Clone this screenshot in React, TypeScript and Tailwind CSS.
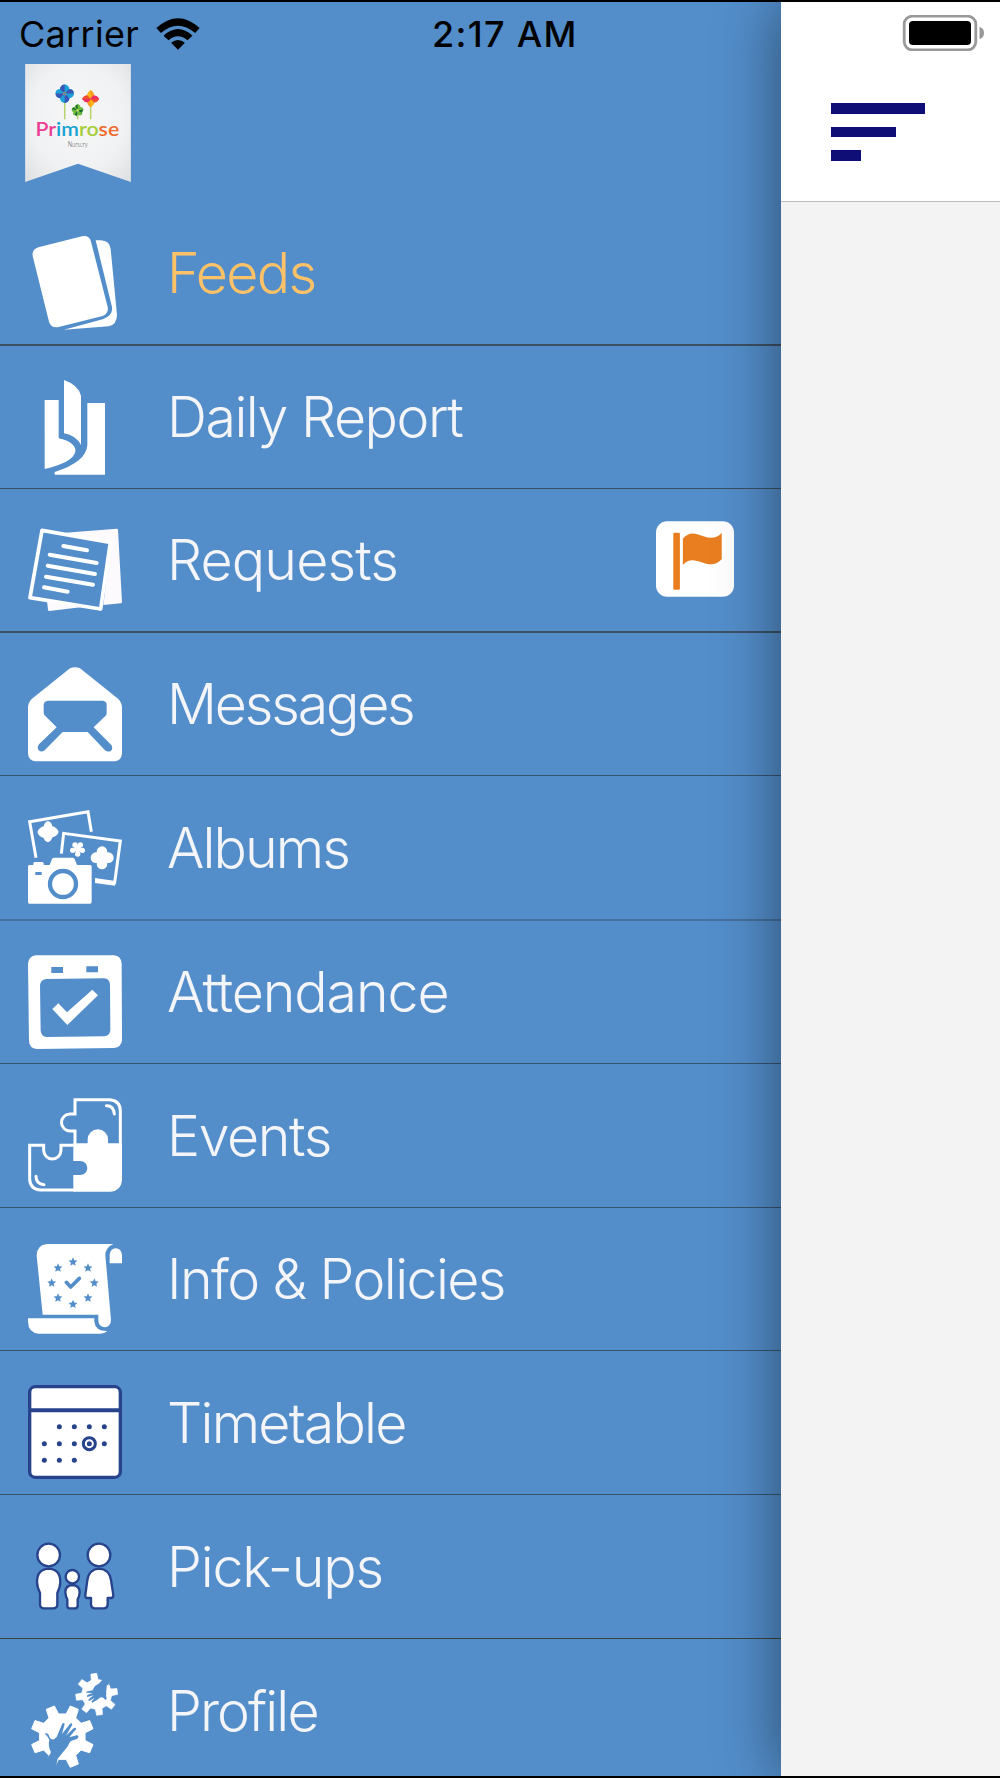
import React from "react";

const BLUE = "#538ecb";
const NAVY = "#27438b";

function gearPath(cx: number, cy: number, outer: number, inner: number, offset: number) {
  const points: string[] = [];
  const at = (r: number, deg: number) => {
    const a = (deg * Math.PI) / 180;
    points.push(`${(cx + r * Math.cos(a)).toFixed(1)} ${(cy + r * Math.sin(a)).toFixed(1)}`);
  };
  for (let i = 0; i < 8; i++) {
    const a = offset + i * 45;
    at(inner, a - 13);
    at(outer, a - 8);
    at(outer, a + 8);
    at(inner, a + 13);
  }
  return `M${points.join("L")}Z`;
}

function starPoints(cx: number, cy: number, r: number) {
  const points: string[] = [];
  for (let i = 0; i < 10; i++) {
    const a = (-90 + i * 36) * (Math.PI / 180);
    const d = i % 2 ? r * 0.46 : r;
    points.push(`${(cx + d * Math.cos(a)).toFixed(1)},${(cy + d * Math.sin(a)).toFixed(1)}`);
  }
  return points.join(" ");
}

function Icon({ top, children }: { top: number; children: React.ReactNode }) {
  return (
    <svg viewBox={`84 ${top} 282 282`} className="h-[94px] w-[94px] shrink-0 overflow-visible" fill="#fff">
      {children}
    </svg>
  );
}

const FeedsIcon = () => (
  <Icon top={77}>
    <path d="M115 111L246 78Q268 74 273 94L323 290Q327 309 308 317L176 350Q153 354 147 334L98 137Q95 118 115 111Z" />
    <path d="M287 90H302Q329 91 332 116L351 314Q350 344 326 348L192 358L308 327Q340 316 336 290Z" />
  </Icon>
);

const DailyIcon = () => (
  <Icon top={508}>
    <path d="M134 568H176V683C245 697 254 749 134 775Z" />
    <path d="M192 508Q235 523 243 555V703Q229 675 192 668Z" />
    <path d="M262 577H315V792H164V784Q259 754 262 704Z" />
  </Icon>
);

const RequestsIcon = () => (
  <Icon top={69}>
    <path fill="#fcfafc" d="M196 98L350 86Q354 86 354 90L366 306Q366 310 362 310L310 315L332 130ZM141 302L242 322L148 333Q144 333 144 329Z" />
    <path d="M126 91L331 127L302 327L90 293Z" fill={BLUE} stroke="#fff" strokeWidth="11" strokeLinejoin="round" />
    <path d="M190 138L261 151M149 164L290 189M143 197L285 222M138 230L279 254M132 262L203 275" stroke="#fff" strokeWidth="12" strokeLinecap="round" />
  </Icon>
);

const MessagesIcon = () => (
  <Icon top={500}>
    <path d="M210 504Q225 497 240 504L355 596Q366 607 366 622V760Q364 780 345 783H105Q86 780 84 760V622Q84 607 95 596Z" />
    <path fill={BLUE} d="M144 601H308Q320 602 320 613V638L319 644L281 681L334 734Q340 744 333 751Q325 757 315 750L263 695H188L134 750Q124 757 116 750Q110 742 117 732L170 681L133 644L131 638V613Q132 602 144 601Z" />
  </Icon>
);

const AlbumsIcon = () => (
  <Icon top={63}>
    <path d="M108 206L89 98L264 68L274 128M184 194L191 133L361 156L344 281L285 275" fill="none" stroke="#fff" strokeWidth="9" />
    <path d="M285 267L346 276L345 290L285 282Z" />
    <path d="M144 96Q155 99 157 112Q169 114 176 128Q173 141 157 145Q154 157 144 160Q133 156 130 146Q116 143 112 129Q118 115 131 112Q134 99 144 96Z" />
    <g>
      <circle cx="306" cy="188" r="16" />
      <circle cx="306" cy="225" r="16" />
      <circle cx="288" cy="206" r="16" />
      <circle cx="325" cy="206" r="16" />
      <circle cx="306" cy="206" r="21" />
    </g>
    <g>
      <circle cx="225" cy="168" r="8" />
      <circle cx="241" cy="168" r="8" />
      <circle cx="218" cy="184" r="8" />
      <circle cx="247" cy="184" r="8" />
      <circle cx="233" cy="195" r="8" />
      <circle cx="233" cy="179" r="10" />
    </g>
    <path d="M88 228H100V223Q101 219 105 219H126Q130 219 131 223V228H149L156 210Q158 206 163 206H217Q222 206 224 210L231 228H270Q275 228 275 233V338Q275 344 270 344H88Q84 344 84 338V233Q84 228 88 228Z" />
    <circle cx="189" cy="285" r="39" fill="#fff" stroke={BLUE} strokeWidth="13" />
    <path d="M106 249H125V258H106Z" fill={BLUE} />
  </Icon>
);

const AttendanceIcon = () => (
  <Icon top={494}>
    <path d="M108 495H342Q364 497 365 520L366 750Q364 771 342 773L110 776Q88 774 87 752L84 520Q86 497 108 495Z" />
    <path fill={BLUE} d="M154 530H189V548H154ZM259 528H294V546H259ZM138 566L312 564Q329 565 330 583L331 720Q329 737 313 738L140 740Q124 738 122 722L120 584Q122 568 138 566Z" />
    <path d="M157 656L175 639L201 666L277 598L294 615L202 704Z" />
  </Icon>
);

const EventsIcon = () => (
  <Icon top={54}>
    <path
      d="M225 191V153H210A25 25 0 0 1 210 102H225V59H330Q361 62 361 93V191M225 196H183V211A26 26 0 0 1 131 211V196H89V298Q91 328 122 330H225"
      fill="none"
      stroke="#fff"
      strokeWidth="9"
    />
    <path d="M220 190H263V178A30 30 0 0 1 324 178V190H366V300Q364 332 332 335H220V285H241A21 21 0 0 0 241 243H220Z" />
    <path d="M319 77Q341 76 343 102M108 289Q108 313 132 314" fill="none" stroke="#fff" strokeWidth="9" strokeLinecap="round" />
  </Icon>
);

const InfoIcon = () => (
  <Icon top={485}>
    <path d="M141 491H340Q316 501 316 525L333 719Q332 740 314 741Q295 739 295 719V703H128L110 526Q110 494 141 491Z" />
    <path d="M329 549V524Q331 505 347 504Q364 505 366 524V549ZM84 714H283V724Q286 753 322 752Q314 760 300 760H116Q85 757 84 724Z" />
    <g fill={BLUE}>
      {[
        [219, 544],
        [264, 562],
        [283, 607],
        [264, 652],
        [219, 671],
        [174, 652],
        [155, 607],
        [174, 562],
      ].map(([x, y]) => (
        <polygon key={`${x}-${y}`} points={starPoints(x, y + 1, 14)} />
      ))}
    </g>
    <path d="M199 606L212 620L238 594" fill="none" stroke={BLUE} strokeWidth="11" strokeLinecap="round" strokeLinejoin="round" />
  </Icon>
);

const TimetableIcon = () => (
  <Icon top={63}>
    <rect x="89" y="68" width="272" height="272" rx="17" stroke={NAVY} strokeWidth="10" />
    <path d="M89 139H361" stroke={NAVY} strokeWidth="12" />
    <g fill={NAVY}>
      {[
        [178, 188],
        [223, 188],
        [268, 188],
        [313, 188],
        [133, 239],
        [178, 239],
        [223, 239],
        [268, 239],
        [313, 239],
        [133, 289],
        [178, 289],
        [223, 289],
      ].map(([x, y]) => (
        <circle key={`${x}-${y}`} cx={x} cy={y} r="7.5" />
      ))}
    </g>
    <circle cx="268" cy="239" r="18" fill="none" stroke={NAVY} strokeWidth="9" />
  </Icon>
);

const PickupsIcon = () => (
  <Icon top={27}>
    <g stroke={NAVY} strokeWidth="7" strokeLinejoin="round">
      <circle cx="146" cy="105" r="34" />
      <circle cx="297" cy="105" r="34" />
      <circle cx="217" cy="170" r="20" />
      <path d="M146 146Q181 148 181 186Q181 200 172 219V254Q171 265 160 265H132Q121 265 120 254V219Q111 200 111 186Q111 148 146 146Z" />
      <path d="M217 195Q239 196 239 217Q238 230 233 238V258Q232 265 225 265H209Q202 265 202 258V238Q197 230 196 217Q196 196 217 195Z" />
      <path d="M297 146Q328 148 333 180L340 225Q340 234 333 234H323V254Q322 265 312 265H284Q274 265 273 254V234H262Q255 234 256 225L262 180Q267 148 297 146Z" />
    </g>
  </Icon>
);

const ProfileIcon = () => (
  <Icon top={99}>
    <path d={gearPath(187, 290, 95, 69, 22.5)} stroke="#fff" strokeWidth="3" strokeLinejoin="round" />
    <path
      fill={BLUE}
      d="M134 281Q144 277 148 290Q153 301 162 298L170 291L186 253Q190 246 194 252L186 282L208 254Q215 246 217 254L198 287L219 266Q230 260 228 268L208 292L230 286Q240 287 232 296L213 303Q206 309 204 318L173 356L166 390L120 378L148 346L153 337Q143 318 148 299Q144 288 134 281Z"
    />
    <path d={gearPath(290, 163, 63, 45, -8)} stroke="#fff" strokeWidth="2" strokeLinejoin="round" />
    <path
      fill={BLUE}
      d="M306 121L326 98L348 110L322 136L318 169Q323 176 316 180Q311 170 302 172L291 180L277 188Q272 186 279 179L284 173L267 183Q262 181 270 174L281 166L262 171Q258 167 267 163L278 159L259 158Q258 153 267 153L278 151L284 139L298 130Z"
    />
    <path d="M320 137L330 136L331 150L319 160Z" />
  </Icon>
);

type Item = {
  label: string;
  icon: React.FC;
  text: string;
  row: string;
  flag?: boolean;
};

const items: Item[] = [
  { label: "Feeds", icon: FeedsIcon, text: "text-[#fdc168] tracking-[-1.7px]", row: "h-[144px] border-b-2 border-[#3d5064]" },
  { label: "Daily Report", icon: DailyIcon, text: "text-[#f4f5f8] tracking-[-1.5px]", row: "h-[143px] border-b border-[#3b4f60]" },
  { label: "Requests", icon: RequestsIcon, text: "text-[#f4f5f8] tracking-[-0.9px]", row: "h-[144px] border-b-2 border-[#3d5064]", flag: true },
  { label: "Messages", icon: MessagesIcon, text: "text-[#f4f5f8] tracking-[-2.2px]", row: "h-[143px] border-b border-[#38546c]" },
  { label: "Albums", icon: AlbumsIcon, text: "text-[#f4f5f8] tracking-[-1.9px]", row: "h-[145px] border-b-2 border-[#456f9c]" },
  { label: "Attendance", icon: AttendanceIcon, text: "text-[#f4f5f8] tracking-[-1.1px]", row: "h-[143px] border-b border-[#38546c]" },
  { label: "Events", icon: EventsIcon, text: "text-[#f4f5f8] tracking-[-1.4px]", row: "h-[144px] border-b border-[#38546c]" },
  { label: "Info & Policies", icon: InfoIcon, text: "text-[#f4f5f8] tracking-[-1.6px]", row: "h-[143px] border-b border-[#38546c]" },
  { label: "Timetable", icon: TimetableIcon, text: "text-[#f4f5f8] tracking-[-1.8px]", row: "h-[144px] border-b border-[#38546c]" },
  { label: "Pick-ups", icon: PickupsIcon, text: "text-[#f4f5f8] tracking-[-1.2px]", row: "h-[144px] border-b border-[#3b443f]" },
  { label: "Profile", icon: ProfileIcon, text: "text-[#f4f5f8] tracking-[-1.9px]", row: "h-[143px]" },
];

const Logo = () => (
  <svg viewBox="76 191 318 355" className="ml-[25px] mt-[4px] h-[118px] w-[106px]">
    <defs>
      <radialGradient id="paper" cx="50%" cy="45%" r="70%">
        <stop offset="0" stopColor="#f7f7f8" />
        <stop offset="0.65" stopColor="#f0f1f2" />
        <stop offset="1" stopColor="#dfe2e4" />
      </radialGradient>
    </defs>
    <path d="M76 191H394V546L235 491L76 546Z" fill="url(#paper)" />
    <path d="M195 300V357M234 340V357M273 310V357" stroke="#b5d36a" strokeWidth="4.5" />
    <g fill="#1ba0d8">
      <circle cx="195" cy="267" r="14" />
      <circle cx="195" cy="294" r="14" />
      <circle cx="181" cy="280" r="14" />
      <circle cx="209" cy="280" r="14" />
    </g>
    <path d="M195 280V253Q181 255 181 267ZM195 280H222Q222 267 209 266ZM195 280V308Q209 305 209 294ZM195 280H168Q168 293 181 294Z" fill="#3c55b5" />
    <circle cx="195" cy="280" r="4" fill="none" stroke="#c9a04e" strokeWidth="2.5" />
    <g fill="#f59a22">
      <path d="M273 269Q285 278 284 288L273 300L262 288Q262 278 273 269Z" />
      <path d="M273 321Q285 313 284 304L273 292L262 304Q262 314 273 321Z" />
    </g>
    <g fill="#ee2e63">
      <path d="M299 296Q291 308 282 306L270 296L282 286Q292 284 299 296Z" />
      <path d="M247 296Q256 308 264 306L276 296L264 286Q254 284 247 296Z" />
    </g>
    <path d="M273 269Q263 277 262 287L273 296ZM273 296L284 304Q283 315 273 321Z" fill="#fbb81b" />
    <path d="M273 296L299 296Q291 308 283 307ZM273 296L264 286Q254 285 247 296Z" fill="#f0512d" />
    <g fill="#6dbb3f">
      <circle cx="234" cy="320" r="8" />
      <circle cx="243" cy="328" r="8" />
      <circle cx="224" cy="328" r="8" />
      <circle cx="227" cy="339" r="7" />
      <circle cx="241" cy="339" r="7" />
    </g>
    <path d="M234 331V312L227 318ZM234 331L251 328L246 338ZM234 331L232 348L225 343ZM234 331L217 327L221 322Z" fill="#176b35" />
    <circle cx="234" cy="330" r="3.5" fill="#d6e34a" />
    <text x="107" y="407" fontSize="59" fontWeight="600" fontFamily="Lato, sans-serif" textLength="252" lengthAdjust="spacingAndGlyphs">
      <tspan fill="#ec3f94">Pr</tspan>
      <tspan fill="#16a2d2">im</tspan>
      <tspan fill="#a4ce39">ro</tspan>
      <tspan fill="#f06a2b">se</tspan>
    </text>
    <text x="204" y="440" fontSize="22" fontWeight="300" fontFamily="Lato, sans-serif" fill="#4a4a4a" textLength="60" lengthAdjust="spacingAndGlyphs">
      Nursery
    </text>
  </svg>
);

const FlagBadge = () => (
  <svg viewBox="48 63 235 228" className="mb-[2px] ml-auto mr-[47px] h-[76px] w-[78px]">
    <rect x="48" y="63" width="235" height="228" rx="34" fill="#fff" />
    <rect x="100" y="98" width="20" height="172" rx="4" fill="#e87e20" />
    <path d="M129 116C165 70 205 142 246 99V178C205 221 165 153 129 195Z" fill="#e87e20" />
  </svg>
);

export default function App() {
  return (
    <div className="flex h-[1778px] w-[1000px] overflow-hidden border-y-2 border-black bg-[#f3f3f3] font-[Inter,sans-serif]">
      <aside className="flex w-[781px] shrink-0 flex-col bg-[#538ecb]">
        <header className="h-[200px] shrink-0">
          <div className="flex h-[58px] items-center pl-[19px] pt-[6px] text-[36px] leading-none text-black">
            <span className="w-[137px] tracking-[0.3px]">Carrier</span>
            <svg viewBox="468 50 134 96" className="h-[32px] w-[44px]">
              <path d="M469 80Q535 20 601 80L587 95Q535 50 483 95Z" />
              <path d="M491 103Q535 63 579 103L564 117Q535 93 506 117Z" />
              <path d="M514 125Q535 108 556 125L535 146Z" />
            </svg>
            <span className="ml-[232px] whitespace-nowrap font-medium tracking-[1.3px]">2:17 AM</span>
          </div>
          <Logo />
        </header>
        <nav>
          {items.map(({ label, icon: ItemIcon, text, row, flag }) => (
            <a key={label} className={`flex items-center pl-[28px] ${row}`}>
              <span className="mt-[19px]">
                <ItemIcon />
              </span>
              <span className={`ml-[45px] whitespace-nowrap text-[55.5px] font-light leading-none ${text}`}>{label}</span>
              {flag && <FlagBadge />}
            </a>
          ))}
        </nav>
      </aside>
      <main className="relative flex-1 bg-[#f3f3f3] shadow-[0_0_60px_rgba(0,0,0,0.48)]">
        <header className="h-[200px] border-b border-[#bcbcbc] bg-white">
          <div className="flex h-[60px] items-center justify-end pr-[16px] pt-[2px]">
            <svg viewBox="0 0 82 36" className="h-[36px] w-[82px]">
              <rect x="2.2" y="1.2" width="71.6" height="33.6" rx="8" fill="none" stroke="#999" strokeWidth="2.8" />
              <rect x="7" y="6" width="62" height="24" rx="4" />
              <path d="M77.5 12Q82 13 82 18T77.5 24Z" fill="#999" />
            </svg>
          </div>
          <div className="flex flex-col gap-[13px] pl-[50px] pt-[41px]">
            <span className="h-[10.5px] w-[94px] bg-[#0e0e76]" />
            <span className="h-[10.5px] w-[65px] bg-[#0e0e76]" />
            <span className="h-[10.5px] w-[30px] bg-[#0e0e76]" />
          </div>
        </header>
      </main>
    </div>
  );
}
